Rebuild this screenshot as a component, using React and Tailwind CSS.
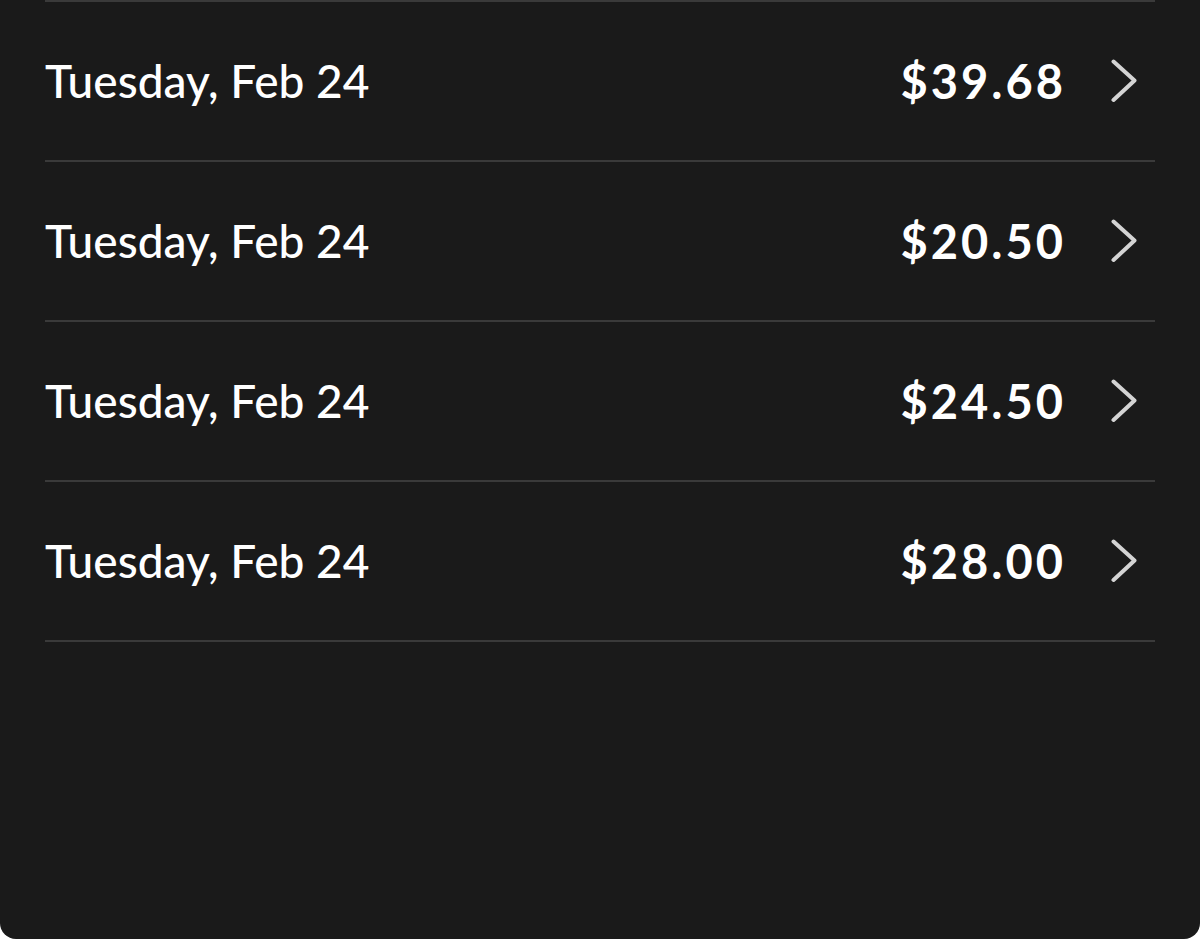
const orders = [
  { id: 1, date: "Tuesday, Feb 24", total: "$39.68" },
  { id: 2, date: "Tuesday, Feb 24", total: "$20.50" },
  { id: 3, date: "Tuesday, Feb 24", total: "$24.50" },
  { id: 4, date: "Tuesday, Feb 24", total: "$28.00" },
];

function Chevron() {
  return (
    <svg
      viewBox="0 0 26 44"
      className="h-[44px] w-[26px]"
      fill="none"
      stroke="#d4d4d4"
      strokeWidth="4"
      strokeLinecap="round"
      strokeLinejoin="round"
    >
      <polyline points="2.5,2.5 23.5,21.5 2.5,41" />
    </svg>
  );
}

export default function App() {
  return (
    <div className="bg-white">
      <div
        className="h-[939px] rounded-b-[16px] bg-[#1a1a1a] px-[45px] text-white"
        style={{ fontFamily: "Lato, 'Noto Sans', sans-serif" }}
      >
        <div className="border-t-2 border-[#3a3a3a]">
          {orders.map((order) => (
            <div
              key={order.id}
              className="flex h-[160px] items-center justify-between border-b-2 border-[#3a3a3a]"
            >
              <p className="text-[46px] font-medium leading-none">
                {order.date}
              </p>

              <div className="flex items-center">
                <p className="mr-[-3px] text-[47px] font-bold leading-none tracking-[3px]">
                  {order.total}
                </p>
                <div className="ml-[48px] mr-[18px] flex">
                  <Chevron />
                </div>
              </div>
            </div>
          ))}
        </div>
      </div>
    </div>
  );
}
